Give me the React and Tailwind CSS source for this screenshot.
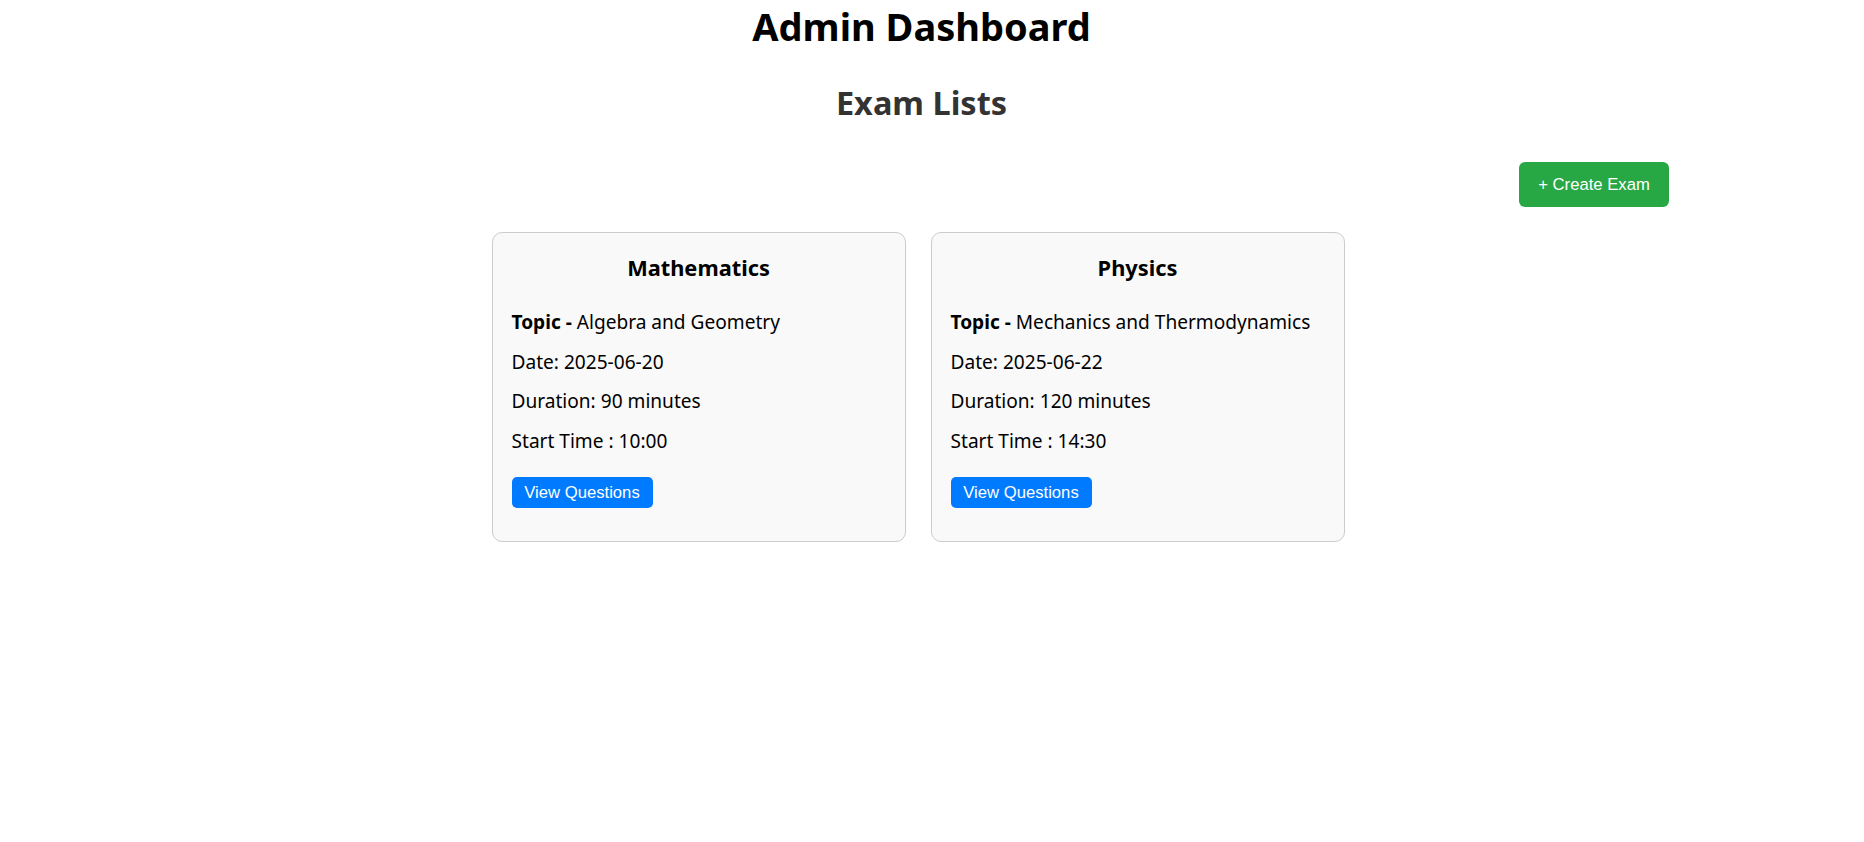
export default function App() {
  const exams = [
    { subject: "Mathematics", topic: "Algebra and Geometry", date: "2025-06-20", duration: 90, start: "10:00" },
    { subject: "Physics", topic: "Mechanics and Thermodynamics", date: "2025-06-22", duration: 120, start: "14:30" },
  ];
  return (
    <div className="min-h-screen w-full bg-white text-black font-['Noto_Sans',sans-serif]">
      <div className="pr-[21px]">
        <h1 className="m-0 h-[53px] text-center text-[38px] font-bold leading-[53px]">Admin Dashboard</h1>
        <h2 className="mt-[29px] h-[42px] text-center text-[32.5px] font-bold leading-[42px] text-[#333333]">Exam Lists</h2>
      </div>
      <div className="mt-[38px] flex justify-end pr-[195px]">
        <button className="flex h-[45px] w-[150px] items-center justify-center rounded-[6px] bg-[#28a745] font-['Liberation_Sans',Arial,sans-serif] text-[16.67px] text-white">
          + Create Exam
        </button>
      </div>
      <div className="mt-[25px] flex flex-wrap justify-center gap-[25px] pr-[28px]">
        {exams.map((e) => (
          <div
            key={e.subject}
            className="flex w-[414px] flex-col rounded-[10px] border border-[#cccccc] bg-[#f9f9f9] px-[19px] pt-[19px] pb-[33px]"
          >
            <h3 className="h-[32px] text-center text-[21.8px] font-bold leading-[32px]">{e.subject}</h3>
            <p className="mt-[25px] h-[27px] whitespace-nowrap text-[19.1px] leading-[27px]">
              <span className="font-bold">Topic -</span> {e.topic}
            </p>
            <p className="mt-[13px] h-[27px] whitespace-nowrap text-[19.1px] leading-[27px]">Date: {e.date}</p>
            <p className="mt-[12px] h-[27px] whitespace-nowrap text-[19.1px] leading-[27px]">Duration: {e.duration} minutes</p>
            <p className="mt-[13px] h-[27px] whitespace-nowrap text-[19.1px] leading-[27px]">Start Time : {e.start}</p>
            <div className="mt-[22px]">
              <button className="flex h-[31px] w-[141px] items-center justify-center rounded-[5px] bg-[#007bff] font-['Liberation_Sans',Arial,sans-serif] text-[16.67px] text-white">
                View Questions
              </button>
            </div>
          </div>
        ))}
      </div>
    </div>
  );
}
